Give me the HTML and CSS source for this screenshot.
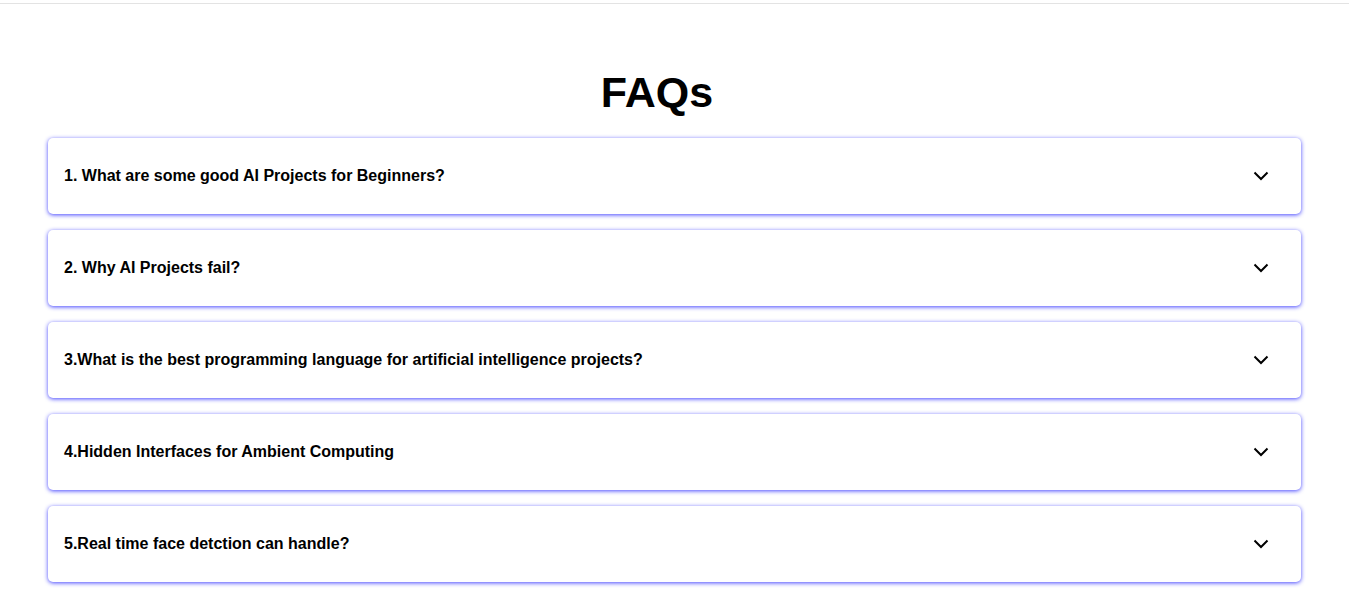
FILE: index.html
```html
<!DOCTYPE html>
<html lang="en">
<head>
<meta charset="utf-8">
<title>FAQs</title>
<link rel="stylesheet" href="styles.css">
</head>
<body>
<div class="topbar"></div>
<section class="faq">
  <h1 class="faq-title">FAQs</h1>
  <div class="faq-list">
    <div class="faq-item">
      <span class="faq-q">1. What are some good AI Projects for Beginners?</span>
      <svg class="chev" width="16" height="10" viewBox="0 0 16 10"><path d="M1.5 1.5 L8 8 L14.5 1.5" fill="none" stroke="#000" stroke-width="2"/></svg>
    </div>
    <div class="faq-item">
      <span class="faq-q">2. Why AI Projects fail?</span>
      <svg class="chev" width="16" height="10" viewBox="0 0 16 10"><path d="M1.5 1.5 L8 8 L14.5 1.5" fill="none" stroke="#000" stroke-width="2"/></svg>
    </div>
    <div class="faq-item">
      <span class="faq-q">3.What is the best programming language for artificial intelligence projects?</span>
      <svg class="chev" width="16" height="10" viewBox="0 0 16 10"><path d="M1.5 1.5 L8 8 L14.5 1.5" fill="none" stroke="#000" stroke-width="2"/></svg>
    </div>
    <div class="faq-item">
      <span class="faq-q">4.Hidden Interfaces for Ambient Computing</span>
      <svg class="chev" width="16" height="10" viewBox="0 0 16 10"><path d="M1.5 1.5 L8 8 L14.5 1.5" fill="none" stroke="#000" stroke-width="2"/></svg>
    </div>
    <div class="faq-item">
      <span class="faq-q">5.Real time face detction can handle?</span>
      <svg class="chev" width="16" height="10" viewBox="0 0 16 10"><path d="M1.5 1.5 L8 8 L14.5 1.5" fill="none" stroke="#000" stroke-width="2"/></svg>
    </div>
  </div>
</section>
</body>
</html>
```

FILE: styles.css
```css
* { box-sizing: border-box; }
body {
  margin: 0;
  font-family: "Liberation Sans", Arial, sans-serif;
  background: #fff;
  color: #000;
}
.topbar {
  height: 4px;
  border-bottom: 1px solid #e3e3e3;
}
.faq {
  padding: 0 48px 40px;
}
.faq-title {
  margin: 0;
  padding: 64px 35px 0 0;
  text-align: center;
  font-size: 43px;
  line-height: 48px;
  font-weight: 700;
}
.faq-list {
  display: flex;
  flex-direction: column;
  gap: 16px;
  margin-top: 22px;
}
.faq-item {
  height: 76px;
  display: flex;
  align-items: center;
  justify-content: space-between;
  padding: 0 32px 0 16px;
  border-radius: 5px;
  background: #fff;
  box-shadow: 0 1px 4px rgba(60, 60, 255, 0.95);
}
.faq-q {
  font-size: 16px;
  font-weight: 700;
}
.chev { display: block; }
```
